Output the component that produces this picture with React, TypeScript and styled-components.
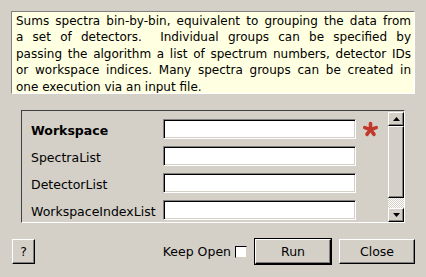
import { FC } from "react";
import styled, { createGlobalStyle } from "styled-components";

const GlobalStyle = createGlobalStyle`
  html, body {
    margin: 0;
    padding: 0;
    background: #d4d0c8;
    font-family: "DejaVu Sans", Verdana, sans-serif;
    font-size: 12px;
    color: #000;
  }
`;

const Dialog = styled.div`
  width: 426px;
  height: 277px;
  box-sizing: border-box;
  padding: 11px 11px 0 11px;
  display: flex;
  flex-direction: column;
  overflow: hidden;
`;

const Description = styled.div`
  box-sizing: border-box;
  width: 404px;
  height: 83px;
  background: #ffffe1;
  border-style: solid;
  border-width: 1px;
  border-color: #808080 #ffffff #ffffff #808080;
  padding: 1px 3px 0 4px;
  line-height: 16.4px;
  overflow: hidden;
`;

const DescLine = styled.span<{ $last?: boolean }>`
  display: block;
  white-space: nowrap;
  text-align: justify;
  text-align-last: ${({ $last }) => ($last ? "left" : "justify")};
`;

const Panel = styled.div`
  box-sizing: border-box;
  margin: 16px 0 0 10px;
  width: 384px;
  height: 113px;
  border-style: solid;
  border-width: 1px;
  border-color: #404040 #ffffff #ffffff #404040;
  display: flex;
`;

const Rows = styled.div`
  flex: 1;
  display: flex;
  flex-direction: column;
  gap: 7px;
  padding: 8px 0 0 9px;
  overflow: hidden;
`;

const Row = styled.div`
  display: grid;
  grid-template-columns: 132px 193px 32px;
  align-items: center;
  height: 20px;
  flex-shrink: 0;
`;

const Label = styled.span<{ $bold?: boolean }>`
  font-weight: ${({ $bold }) => ($bold ? "bold" : "normal")};
  font-size: 12.5px;
  white-space: nowrap;
  padding-top: 2px;
`;

const TextInput = styled.div`
  box-sizing: border-box;
  height: 20px;
  background: #fff;
  border-style: solid;
  border-width: 1px;
  border-color: #808080 #ffffff #ffffff #808080;
  box-shadow: inset 1px 1px 0 #000, inset -1px -1px 0 #d4d0c8;
`;

const Star = styled.svg`
  margin-left: 6px;
`;

const ScrollBar = styled.div`
  width: 16px;
  margin: 1px 0 0 0;
  display: flex;
  flex-direction: column;
`;

const Raised = styled.div`
  box-sizing: border-box;
  background: #d4d0c8;
  border-style: solid;
  border-width: 1px;
  border-color: #ffffff #000000 #000000 #ffffff;
  box-shadow: inset -1px -1px 0 #808080;
`;

const ArrowButton = styled(Raised)`
  height: 14px;
  display: flex;
  align-items: center;
  justify-content: center;
`;

const Thumb = styled(Raised)`
  height: 72px;
`;

const Track = styled.div`
  flex: 1;
  background-color: #d4d0c8;
  background-image: repeating-conic-gradient(#ffffff 0 25%, #d4d0c8 0 50%);
  background-size: 2px 2px;
`;

const Footer = styled.div`
  display: flex;
  align-items: center;
  margin-top: 16px;
  padding-left: 1px;
`;

const ButtonGroup = styled.div`
  display: flex;
  align-items: center;
  gap: 8px;
`;

const Button = styled(Raised)<{ $default?: boolean; $width: number }>`
  width: ${({ $width }) => $width}px;
  height: 25px;
  display: flex;
  align-items: center;
  justify-content: center;
  font-size: 12.5px;
  outline: ${({ $default }) => ($default ? "1px solid #000" : "none")};
`;

const Spacer = styled.div`
  flex: 1;
`;

const KeepOpen = styled.label`
  display: flex;
  align-items: center;
  gap: 4px;
  font-size: 12.5px;
  margin-right: 8px;
`;

const CheckBox = styled.span`
  box-sizing: border-box;
  width: 12px;
  height: 12px;
  background: #fff;
  border-style: solid;
  border-width: 1px;
  border-color: #000 #d4d0c8 #d4d0c8 #000;
`;

const Arrow: FC<{ down?: boolean }> = ({ down }) => (
  <svg width="7" height="4" viewBox="0 0 7 4">
    <polygon
      points={down ? "0,0 7,0 3.5,4" : "3.5,0 7,4 0,4"}
      fill="#000"
    />
  </svg>
);

const descriptionLines = [
  "Sums spectra bin-by-bin, equivalent to grouping the data from",
  "a set of detectors.\u00a0 Individual groups can be specified by",
  "passing the algorithm a list of spectrum numbers, detector IDs",
  "or workspace indices. Many spectra groups can be created in",
  "one execution via an input file.",
];

const properties = [
  { name: "Workspace", bold: true, required: true },
  { name: "SpectraList" },
  { name: "DetectorList" },
  { name: "WorkspaceIndexList" },
];

const App: FC = () => {
  return (
    <>
      <GlobalStyle />
      <Dialog>
        <Description>
          {descriptionLines.map((line, i) => (
            <DescLine key={i} $last={i === descriptionLines.length - 1}>
              {line}
            </DescLine>
          ))}
        </Description>
        <Panel>
          <Rows>
            {properties.map((p) => (
              <Row key={p.name}>
                <Label $bold={p.bold}>{p.name}</Label>
                <TextInput />
                {p.required ? (
                  <Star width="17" height="17" viewBox="-8.5 -8.5 17 17">
                    {[0, 72, 144, 216, 288].map((a) => (
                      <line
                        key={a}
                        x1="0"
                        y1="0"
                        x2={6 * Math.sin((a * Math.PI) / 180)}
                        y2={-6 * Math.cos((a * Math.PI) / 180)}
                        stroke="#c0392b"
                        strokeWidth="3.6"
                        strokeLinecap="round"
                      />
                    ))}
                  </Star>
                ) : (
                  <span />
                )}
              </Row>
            ))}
          </Rows>
          <ScrollBar>
            <ArrowButton>
              <Arrow />
            </ArrowButton>
            <Thumb />
            <Track />
            <ArrowButton>
              <Arrow down />
            </ArrowButton>
          </ScrollBar>
        </Panel>
        <Footer>
          <Button $width={23}>?</Button>
          <Spacer />
          <KeepOpen>
            Keep Open <CheckBox />
          </KeepOpen>
          <ButtonGroup>
            <Button $default $width={76}>
              Run
            </Button>
            <Button $width={76}>Close</Button>
          </ButtonGroup>
        </Footer>
      </Dialog>
    </>
  );
};

export default App;
